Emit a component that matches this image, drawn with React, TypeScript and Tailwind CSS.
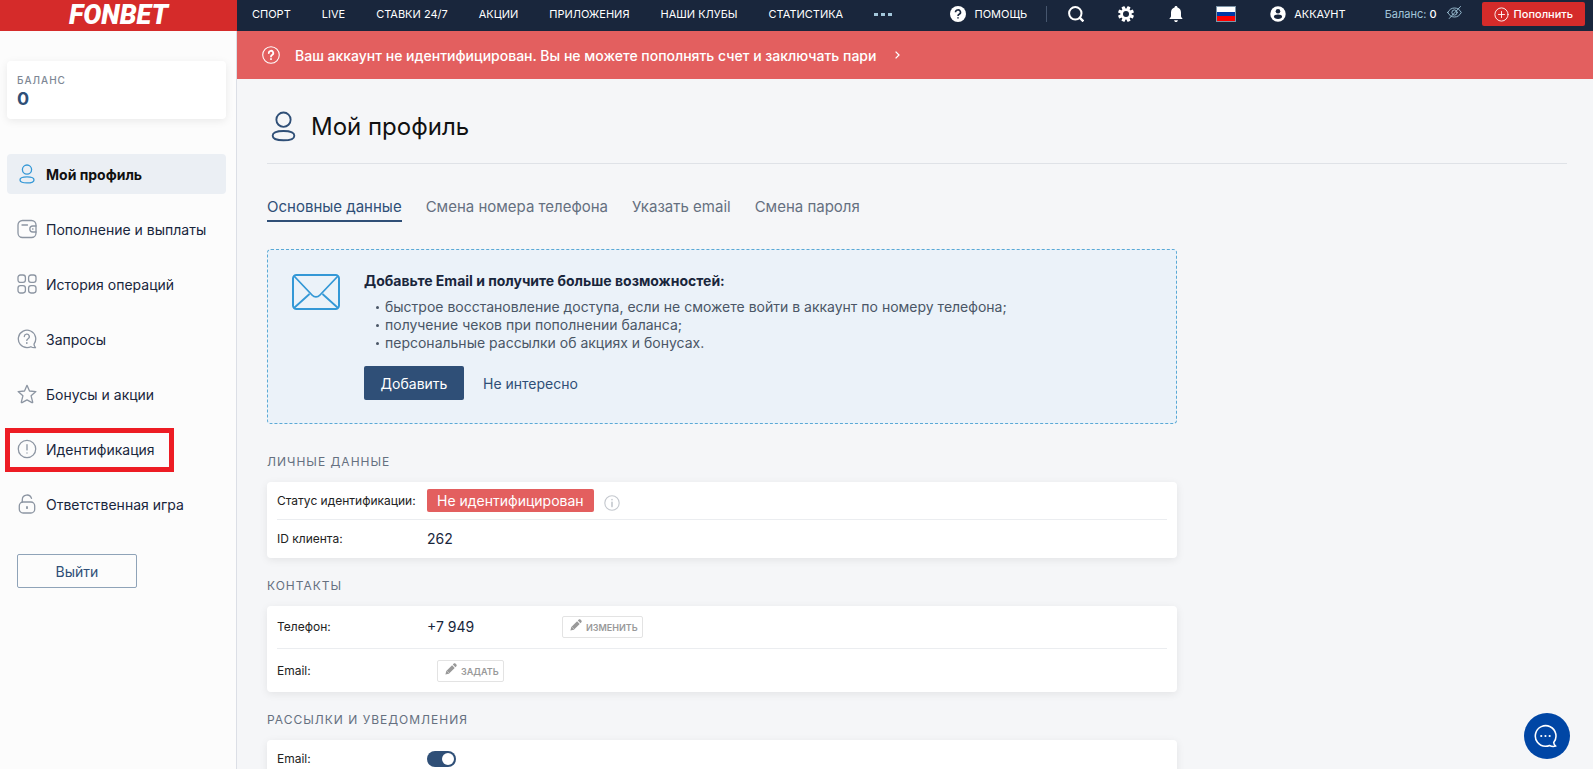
import React, { useState } from "react";

const NAV_LINKS = ["СПОРТ", "LIVE", "СТАВКИ 24/7", "АКЦИИ", "ПРИЛОЖЕНИЯ", "НАШИ КЛУБЫ", "СТАТИСТИКА"];

const TABS = ["Основные данные", "Смена номера телефона", "Указать email", "Смена пароля"];

const BENEFITS = [
  "быстрое восстановление доступа, если не сможете войти в аккаунт по номеру телефона;",
  "получение чеков при пополнении баланса;",
  "персональные рассылки об акциях и бонусах.",
];

function Icon({ children, className = "size-5", strokeWidth = 1.3 }: {
  children: React.ReactNode;
  className?: string;
  strokeWidth?: number;
}) {
  return (
    <svg
      viewBox="0 0 20 20"
      fill="none"
      stroke="currentColor"
      strokeWidth={strokeWidth}
      strokeLinecap="round"
      strokeLinejoin="round"
      className={`shrink-0 ${className}`}
      aria-hidden="true"
    >
      {children}
    </svg>
  );
}

const UserShape = () => (
  <>
    <circle cx="10" cy="5.6" r="4.6" />
    <path d="M10 12.9c4 0 7 1 7 3s-3 3-7 3-7-1-7-3 3-3 7-3z" />
  </>
);

const MENU = [
  { label: "Мой профиль", icon: <UserShape /> },
  {
    label: "Пополнение и выплаты",
    icon: (
      <>
        <rect x="1" y="1.5" width="18" height="17" rx="4.5" />
        <path d="M5 6h5.5M19 7h-3.2a3 3 0 0 0 0 6H19" />
        <path d="M15.6 10h.4" />
      </>
    ),
  },
  {
    label: "История операций",
    icon: (
      <>
        <rect x="1" y="1" width="7.4" height="7.4" rx="2.4" />
        <rect x="11.6" y="1" width="7.4" height="7.4" rx="2.4" />
        <rect x="1" y="11.6" width="7.4" height="7.4" rx="2.4" />
        <rect x="11.6" y="11.6" width="7.4" height="7.4" rx="2.4" />
      </>
    ),
  },
  {
    label: "Запросы",
    icon: (
      <>
        <path d="M17 15.100A8.700 8.700 0 1 0 10 18.600c1.600 0 2.800-.3 3.900-.9 1.300.9 2.900 1.200 4.600.9-.9-.9-1.400-2-1.500-3.500z" />
        <path d="M7.300 7.600a2.500 2.500 0 1 1 3.700 2.200c-.8.4-1.200.8-1.200 1.600" />
        <path d="M9.800 13.900v.2" strokeWidth="1.7" />
      </>
    ),
  },
  {
    label: "Бонусы и акции",
    icon: (
      <path d="M10 1.300l2.500 5.700 6.400.6-4.800 4.200 1.600 6.300c.1.500-.3.700-.7.500L10 15.900l-5 2.700c-.4.200-.8 0-.7-.5l1.600-6.300L1.100 7.600 7.500 7z" />
    ),
  },
  {
    label: "Идентификация",
    marked: true,
    icon: (
      <>
        <circle cx="10" cy="10" r="8.7" />
        <path d="M10 5.600v5.300M10 13.900v.2" />
      </>
    ),
  },
  {
    label: "Ответственная игра",
    icon: (
      <>
        <rect x="2.3" y="8" width="15.4" height="11" rx="3.8" />
        <path d="M5.300 8V5.600a4.700 4.700 0 0 1 9.200-1.200" />
        <path d="M10 13v1.200" strokeWidth="1.8" />
      </>
    ),
  },
];

function TopBar() {
  return (
    <header className="flex h-[31px] shrink-0 bg-[#19263c] text-[11px] text-white">
      <a href="#" className="flex w-[237px] shrink-0 items-center justify-center bg-[#d52b2a] pb-px font-['Roboto',sans-serif] text-[27px] leading-[27px] font-black italic">
        FONBET
      </a>
      <div className="flex flex-1 items-center justify-between pr-2 pb-[3px] pl-[15px]">
        <nav className="flex items-center gap-[31px]">
          {NAV_LINKS.map((l) => (
            <a key={l} href="#">{l}</a>
          ))}
          <button aria-label="Ещё" className="flex gap-[3px]">
            <span className="h-[3px] w-1 bg-[#a3c7db]" />
            <span className="h-[3px] w-1 bg-[#a3c7db]" />
            <span className="h-[3px] w-1 bg-[#a3c7db]" />
          </button>
        </nav>

        <div className="flex items-center">
          <a href="#" className="flex items-center gap-2">
            <svg viewBox="0 0 16 16" className="size-4" aria-hidden="true">
              <circle cx="8" cy="8" r="8" fill="#fff" />
              <path d="M5.500 6.200a2.500 2.300 0 1 1 3.700 2c-.8.500-1.200.8-1.200 1.700M8 11.300v1.300" fill="none" stroke="#19263c" strokeWidth="1.6" />
            </svg>
            ПОМОЩЬ
          </a>
          <span className="ml-[19px] h-4 w-px bg-[#46566e]" />
          <button aria-label="Поиск" className="ml-[21px]">
            <svg viewBox="0 0 16 16" className="size-4" fill="none" stroke="#fff" aria-hidden="true">
              <circle cx="7.300" cy="7.300" r="6.200" strokeWidth="2" />
              <path d="M11.700 11.700l3.700 3.700" strokeWidth="2.4" />
            </svg>
          </button>
          <button aria-label="Настройки" className="ml-[34px]">
            <svg viewBox="0 0 16 16" className="size-4" aria-hidden="true">
              <g fill="#fff">
                <rect x="6.300" y="0" width="3.400" height="16" rx=".8" transform="rotate(22.5 8 8)" />
                <rect x="6.300" y="0" width="3.400" height="16" rx=".8" transform="rotate(67.5 8 8)" />
                <rect x="6.300" y="0" width="3.400" height="16" rx=".8" transform="rotate(112.5 8 8)" />
                <rect x="6.300" y="0" width="3.400" height="16" rx=".8" transform="rotate(157.5 8 8)" />
                <circle cx="8" cy="8" r="5.600" />
              </g>
              <circle cx="8" cy="8" r="3" fill="#19263c" />
            </svg>
          </button>
          <button aria-label="Уведомления" className="ml-[34px]">
            <svg viewBox="0 0 16 16" className="size-4" fill="#fff" aria-hidden="true">
              <path d="M8 0c.9 0 1.400.6 1.500 1.400C11.700 2.100 13 4 13 6.400v3.800c0 .9 1.600 1.900 1.600 2.900H1.400c0-1 1.600-2 1.600-2.900V6.400c0-2.400 1.300-4.300 3.500-5C6.600.6 7.100 0 8 0z" />
              <path d="M6 14.200h4L9 16H7z" />
            </svg>
          </button>
          <button aria-label="Язык: русский" className="ml-8 flex h-4 w-5 flex-col border border-[#7d95a8]">
            <span className="w-full flex-1 bg-white" />
            <span className="w-full flex-1 bg-[#0039a6]" />
            <span className="w-full flex-1 bg-[#ff0000]" />
          </button>
          <a href="#" className="ml-[34px] flex items-center gap-2">
            <svg viewBox="0 0 16 16" className="size-4" aria-hidden="true">
              <circle cx="8" cy="8" r="7.700" fill="#fff" />
              <circle cx="8" cy="5.300" r="2.300" fill="#19263c" />
              <path d="M8 8.600c2.500 0 4.100.9 4.100 2.100S10.500 12.900 8 12.900s-4.100-1-4.100-2.200S5.500 8.600 8 8.600z" fill="#19263c" />
            </svg>
            АККАУНТ
          </a>
          <span className="ml-[39px] text-[#a3c7db]">
            Баланс: <b className="font-medium text-white">0</b>
          </span>
          <button aria-label="Скрыть баланс" className="mb-[3px] ml-[10px] text-[#a3c7db]">
            <Icon className="size-[15px]" strokeWidth={1.2}>
              <path d="M1 10c2-4 5.200-6 9-6s7 2 9 6c-2 4-5.200 6-9 6s-7-2-9-6z" />
              <circle cx="10" cy="10" r="3.500" />
              <path d="M3 18L18 2" />
            </Icon>
          </button>
          <button className="ml-5 flex h-6 items-center gap-[5px] rounded-xs bg-[#d52b2a] px-3 font-medium">
            <Icon className="size-[15px]" strokeWidth={1.2}>
              <circle cx="10" cy="10" r="8.800" />
              <path d="M10 6v8M6 10h8" />
            </Icon>
            Пополнить
          </button>
        </div>
      </div>
    </header>
  );
}

function Sidebar() {
  return (
    <aside className="w-[237px] shrink-0 border-r border-[#dcdfe6] bg-[#fcfcfc] pt-[30px] pr-[10px] pl-[7px]">
      <div className="rounded bg-white px-[10px] pt-3 pb-[9px] shadow-[0_2px_8px_rgba(0,0,0,0.08)]">
        <div className="text-[10px] leading-[14px] font-medium tracking-[1px] text-[#7e8795]">БАЛАНС</div>
        <div className="text-lg leading-[23px] font-bold text-[#2f4f77]">0</div>
      </div>

      <ul className="mt-[35px] flex flex-col gap-[15px]">
        {MENU.map((item, i) => (
          <li key={item.label} className="relative">
            <a
              href="#"
              className={
                i === 0
                  ? "flex h-10 items-center gap-[9px] rounded bg-[#ebeff4] px-[10px] text-sm font-bold text-[#111]"
                  : "flex h-10 items-center gap-[9px] rounded px-[10px] text-sm text-[#19263c]"
              }
            >
              <span className={i === 0 ? "text-[#3498d6]" : "text-[#8c95a2]"}>
                <Icon>{item.icon}</Icon>
              </span>
              <span className="pt-0.5">{item.label}</span>
            </a>
            {item.marked && (
              <span className="pointer-events-none absolute -top-px -left-[2px] h-11 w-[169px] border-[5px] border-[#ed1c24]" />
            )}
          </li>
        ))}
      </ul>

      <button className="mt-[30px] ml-[10px] h-[34px] w-[120px] rounded-xs border border-[#8fa3b8] pt-0.5 text-sm text-[#2f4f77]">
        Выйти
      </button>
    </aside>
  );
}

function Section({ title, children }: { title: string; children: React.ReactNode }) {
  return (
    <section className="max-w-[910px]">
      <h2 className="pt-5 pb-3 text-xs leading-4 tracking-[1px] text-[#657080]">{title}</h2>
      <div className="divide-y divide-[#ebedf0] rounded bg-white px-[10px] shadow-[0_2px_8px_rgba(0,0,0,0.08)]">
        {children}
      </div>
    </section>
  );
}

function EditButton({ children }: { children: React.ReactNode }) {
  return (
    <button className="flex h-[22px] items-center gap-1 rounded-xs border border-[#e3e3e3] pr-1 pl-[7px] text-[9px] font-semibold text-[#999]">
      <svg viewBox="0 0 12 12" className="mb-1 size-3" fill="currentColor" aria-hidden="true">
        <path d="M.4 11.600l.9-3.500 5.800-5.800 2.600 2.600-5.800 5.800zM7.800 1.600l1-1c.5-.5 1.100-.5 1.600 0l1 1c.5.500.5 1.100 0 1.600l-1 1z" />
        <path d="M2.600 8.600l.9.900" stroke="#fff" strokeWidth=".8" />
      </svg>
      <span className="pt-0.5">{children}</span>
    </button>
  );
}

export default function App() {
  const [tab, setTab] = useState(0);
  const [mailing, setMailing] = useState(true);

  return (
    <div className="flex h-screen flex-col overflow-hidden bg-[#f5f6f8] font-['Inter',sans-serif]">
      <TopBar />
      <div className="flex min-h-0 flex-1">
        <Sidebar />

        <main className="min-w-0 flex-1 overflow-hidden">
          <a href="#" className="flex h-12 items-center bg-[#e35f5f] px-[25px] text-sm font-medium text-white">
            <Icon className="mr-[15px] size-[18px]" strokeWidth={1.2}>
              <circle cx="10" cy="10" r="9.200" />
              <path d="M7.500 7.800a2.500 2.500 0 1 1 3.700 2.200c-.8.500-1.200.9-1.200 1.700M10 14.400v.2" strokeWidth="2" />
            </Icon>
            <span className="pt-0.5">Ваш аккаунт не идентифицирован. Вы не можете пополнять счет и заключать пари</span>
            <svg viewBox="0 0 5 8" className="ml-[19px] h-2 w-[5px]" fill="none" stroke="currentColor" strokeWidth="1.3" aria-hidden="true">
              <path d="M.6.600L4 4 .6 7.400" />
            </svg>
          </a>

          <div className="pr-[26px] pl-[30px]">
            <div className="flex h-[85px] items-center gap-3 border-b border-[#dfe2e7] pt-[10px]">
              <span className="ml-px text-[#2f4f77]">
                <Icon className="size-[31px]" strokeWidth={1.2}>
                  <UserShape />
                </Icon>
              </span>
              <h1 className="pt-0.5 text-2xl text-[#111]">Мой профиль</h1>
            </div>

            <div role="tablist" className="mt-[30px] flex gap-6 text-[15px] leading-[26px]">
              {TABS.map((t, i) => (
                <button
                  key={t}
                  role="tab"
                  aria-selected={tab === i}
                  onClick={() => setTab(i)}
                  className={
                    tab === i
                      ? "border-b-2 border-[#2f4f77] text-[#2f4f77]"
                      : "border-b-2 border-transparent text-[#657080]"
                  }
                >
                  {t}
                </button>
              ))}
            </div>

            <div className="mt-[27px] mb-[10px] flex max-w-[910px] gap-6 rounded border border-dashed border-[#5aa9d6] bg-[#ebf2f9] px-6 pt-6 pb-[23px]">
              <svg viewBox="0 0 48 36" className="h-9 w-12 shrink-0" fill="none" stroke="#3498d6" strokeWidth="2" aria-hidden="true">
                <rect x="1" y="1" width="46" height="34" rx="3.500" />
                <path d="M2 2l18 19c2.500 2.600 5.500 2.600 8 0L46 2M2 34l15.500-14M46 34L30.500 20" strokeWidth="1.8" />
              </svg>
              <div>
                <h2 className="text-sm leading-[14px] font-bold text-[#19263c]">Добавьте Email и получите больше возможностей:</h2>
                <ul className="mt-[10px] pl-3 text-sm leading-[18px] text-[#4a5666]">
                  {BENEFITS.map((b) => (
                    <li key={b} className="flex items-center gap-[6px]">
                      <span className="size-[3px] rounded-full bg-[#4a5666]" />
                      {b}
                    </li>
                  ))}
                </ul>
                <div className="mt-[14px] flex items-center text-sm">
                  <button className="h-[34px] w-[100px] rounded-xs bg-[#2f4f77] pt-0.5 text-white">Добавить</button>
                  <button className="ml-[19px] pt-0.5 text-[#2f4f77]">Не интересно</button>
                </div>
              </div>
            </div>

            <Section title="ЛИЧНЫЕ ДАННЫЕ">
              <div className="flex h-[38px] items-center">
                <span className="w-[150px] shrink-0 text-xs text-[#222]">Статус идентификации:</span>
                <span className="rounded-xs bg-[#e35f5f] px-[10px] text-sm leading-[23px] text-white">Не идентифицирован</span>
                <button aria-label="Подробнее" className="mt-1 ml-[10px] text-[#c4c8ce]">
                  <Icon className="size-4" strokeWidth={1.4}>
                    <circle cx="10" cy="10" r="9" />
                    <path d="M10 9v5.500M10 5.700v.3" strokeWidth="2" />
                  </Icon>
                </button>
              </div>
              <div className="flex h-[38px] items-center">
                <span className="w-[150px] shrink-0 text-xs text-[#222]">ID клиента:</span>
                <span className="text-sm text-[#19263c]">262</span>
              </div>
            </Section>

            <Section title="КОНТАКТЫ">
              <div className="flex h-[43px] items-center">
                <span className="w-[150px] shrink-0 text-xs text-[#222]">Телефон:</span>
                <span className="w-[135px] text-sm text-[#19263c]">+7 949</span>
                <EditButton>ИЗМЕНИТЬ</EditButton>
              </div>
              <div className="flex h-[43px] items-center">
                <span className="w-40 shrink-0 text-xs text-[#222]">Email:</span>
                <EditButton>ЗАДАТЬ</EditButton>
              </div>
            </Section>

            <Section title="РАССЫЛКИ И УВЕДОМЛЕНИЯ">
              <div className="flex h-[38px] items-center">
                <label htmlFor="mailing" className="w-[150px] shrink-0 text-xs text-[#222]">Email:</label>
                <input
                  id="mailing"
                  type="checkbox"
                  checked={mailing}
                  onChange={(e) => setMailing(e.target.checked)}
                  className="h-4 w-[29px] appearance-none rounded-full bg-[#b4bcc8] p-[2px] before:block before:size-3 before:rounded-full before:bg-white checked:bg-[#2f4f77] checked:before:ml-[13px]"
                />
              </div>
            </Section>
          </div>
        </main>
      </div>

      <button aria-label="Чат" className="fixed right-[23px] bottom-[10px] flex size-[46px] items-center justify-center rounded-full bg-[#0046a5] pr-0.5 text-white">
        <Icon className="size-6" strokeWidth={1.3}>
          <path d="M16.400 15.400A8.600 8.600 0 1 0 9.500 18.600c1.200 0 2.400-.2 3.400-.7 1.400.8 3.400 1.100 5.200.5-1-.8-1.600-1.800-1.700-3z" />
          <path d="M6 10h.1M9.500 10h.1M13 10h.1" strokeWidth="1.7" />
        </Icon>
      </button>
    </div>
  );
}
